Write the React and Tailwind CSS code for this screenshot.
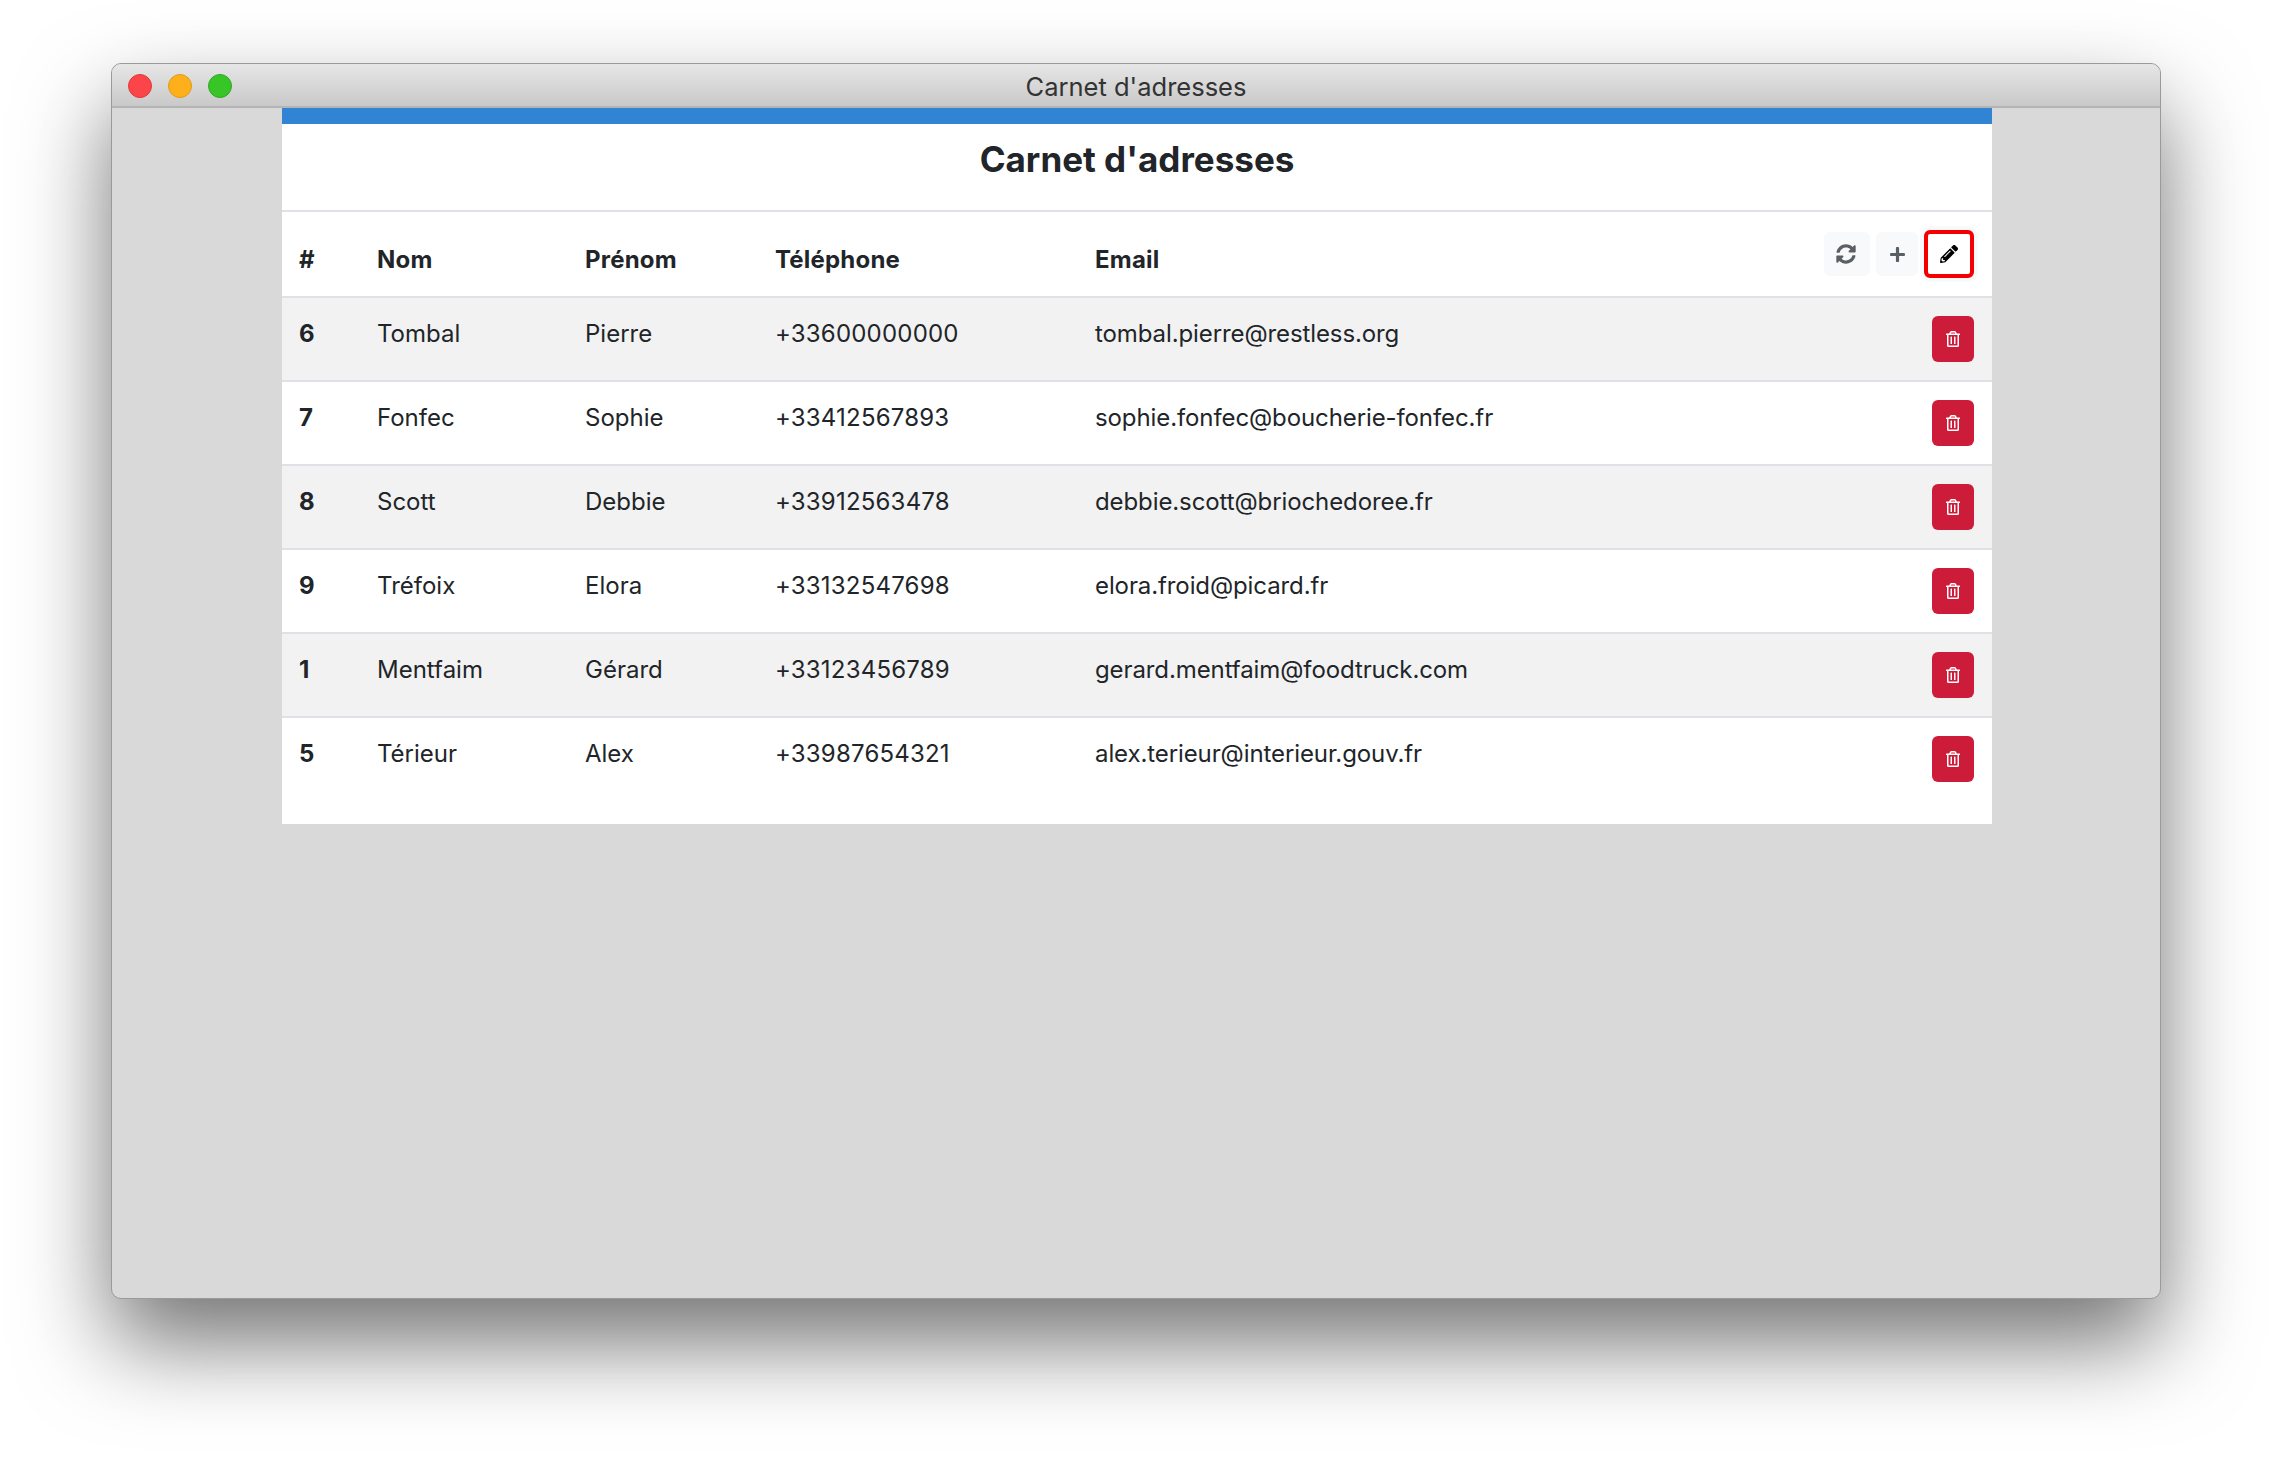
import React from 'react';
import { FaSyncAlt, FaPlus, FaPencilAlt, FaRegTrashAlt } from 'react-icons/fa';

const contacts = [
  { id: 6, nom: 'Tombal', prenom: 'Pierre', tel: '+33600000000', email: 'tombal.pierre@restless.org' },
  { id: 7, nom: 'Fonfec', prenom: 'Sophie', tel: '+33412567893', email: 'sophie.fonfec@boucherie-fonfec.fr' },
  { id: 8, nom: 'Scott', prenom: 'Debbie', tel: '+33912563478', email: 'debbie.scott@briochedoree.fr' },
  { id: 9, nom: 'Tréfoix', prenom: 'Elora', tel: '+33132547698', email: 'elora.froid@picard.fr' },
  { id: 1, nom: 'Mentfaim', prenom: 'Gérard', tel: '+33123456789', email: 'gerard.mentfaim@foodtruck.com' },
  { id: 5, nom: 'Térieur', prenom: 'Alex', tel: '+33987654321', email: 'alex.terieur@interieur.gouv.fr' },
];

const gridCols = 'grid grid-cols-[77px_208px_190px_320px_1fr_auto]';

function ContactRow({ contact, striped }) {
  return (
    <div className={`${gridCols} border-t-2 border-[#dee2e6] h-[84px] ${striped ? 'bg-[#f2f2f2]' : 'bg-white'}`}>
      <div className="pl-[17px] pt-[18px] font-bold">{contact.id}</div>
      <div className="pl-[18px] pt-[18px]">{contact.nom}</div>
      <div className="pl-[18px] pt-[18px]">{contact.prenom}</div>
      <div className="pl-[18px] pt-[18px] tracking-[0.2px]">{contact.tel}</div>
      <div className="pl-[18px] pt-[18px] tracking-[-0.1px]">{contact.email}</div>
      <div className="pr-[18px] pt-[18px]">
        <button className="w-[42px] h-[46px] rounded-[6px] bg-[#cc1c39] text-white flex items-center justify-center">
          <FaRegTrashAlt className="w-[14px] h-[16px]" />
        </button>
      </div>
    </div>
  );
}

function App() {
  return (
    <div className="h-[1458px] bg-white pt-[63px] px-[111px] overflow-hidden font-['Inter',sans-serif] text-[24px] leading-[36px] text-[#212529]">
      <div className="h-[1236px] rounded-[10px] border border-[#9a9a9a] bg-[#d9d9d9] overflow-hidden shadow-[0_44px_90px_rgba(0,0,0,0.55)]">
        <div className="relative h-[44px] border-b-2 border-[#b4b4b4] bg-gradient-to-b from-[#e6e6e6] to-[#c9c9c9] flex items-center justify-center">
          <div className="absolute left-[16px] top-[10px] flex gap-[16px]">
            <span className="w-[24px] h-[24px] rounded-full bg-[#fc4548] border border-[#e0383b]" />
            <span className="w-[24px] h-[24px] rounded-full bg-[#feb01c] border border-[#e09a14]" />
            <span className="w-[24px] h-[24px] rounded-full bg-[#37c528] border border-[#2eaa20]" />
          </div>
          <span className="text-[25.5px] leading-[32px] text-[#333333] pt-[3px]">Carnet d'adresses</span>
        </div>

        <div className="w-[1710px] ml-[170px] bg-white border-t-[16px] border-[#3184d4] pb-[24px]">
          <h1 className="h-[86px] pt-[5px] text-center text-[35px] leading-[60px] font-bold">Carnet d'adresses</h1>

          <div className={`${gridCols} border-t-2 border-[#dee2e6] h-[86px] font-bold tracking-[0.2px]`}>
            <div className="pl-[17px] pt-[30px]">#</div>
            <div className="pl-[18px] pt-[30px]">Nom</div>
            <div className="pl-[18px] pt-[30px]">Prénom</div>
            <div className="pl-[18px] pt-[30px]">Téléphone</div>
            <div className="pl-[18px] pt-[30px]">Email</div>
            <div className="pr-[18px] pt-[20px] flex items-start">
              <button className="w-[46px] h-[44px] mr-[6px] rounded-[6px] bg-[#f8f9fa] text-[#5a5f64] flex items-center justify-center">
                <FaSyncAlt className="w-[20px] h-[20px] -ml-[2px]" />
              </button>
              <button className="w-[42px] h-[44px] mr-[6px] rounded-[6px] bg-[#f8f9fa] text-[#5a5f64] flex items-center justify-center">
                <FaPlus className="w-[17px] h-[17px]" />
              </button>
              <button className="w-[50px] h-[48px] -mt-[2px] rounded-[6px] bg-white border-4 border-[#f40000] ring-4 ring-[#f8f9fa] text-black flex items-center justify-center">
                <FaPencilAlt className="w-[18px] h-[18px]" />
              </button>
            </div>
          </div>

          {contacts.map((contact, i) => (
            <ContactRow key={contact.id} contact={contact} striped={i % 2 === 0} />
          ))}
        </div>
      </div>
    </div>
  );
}

export default App;
